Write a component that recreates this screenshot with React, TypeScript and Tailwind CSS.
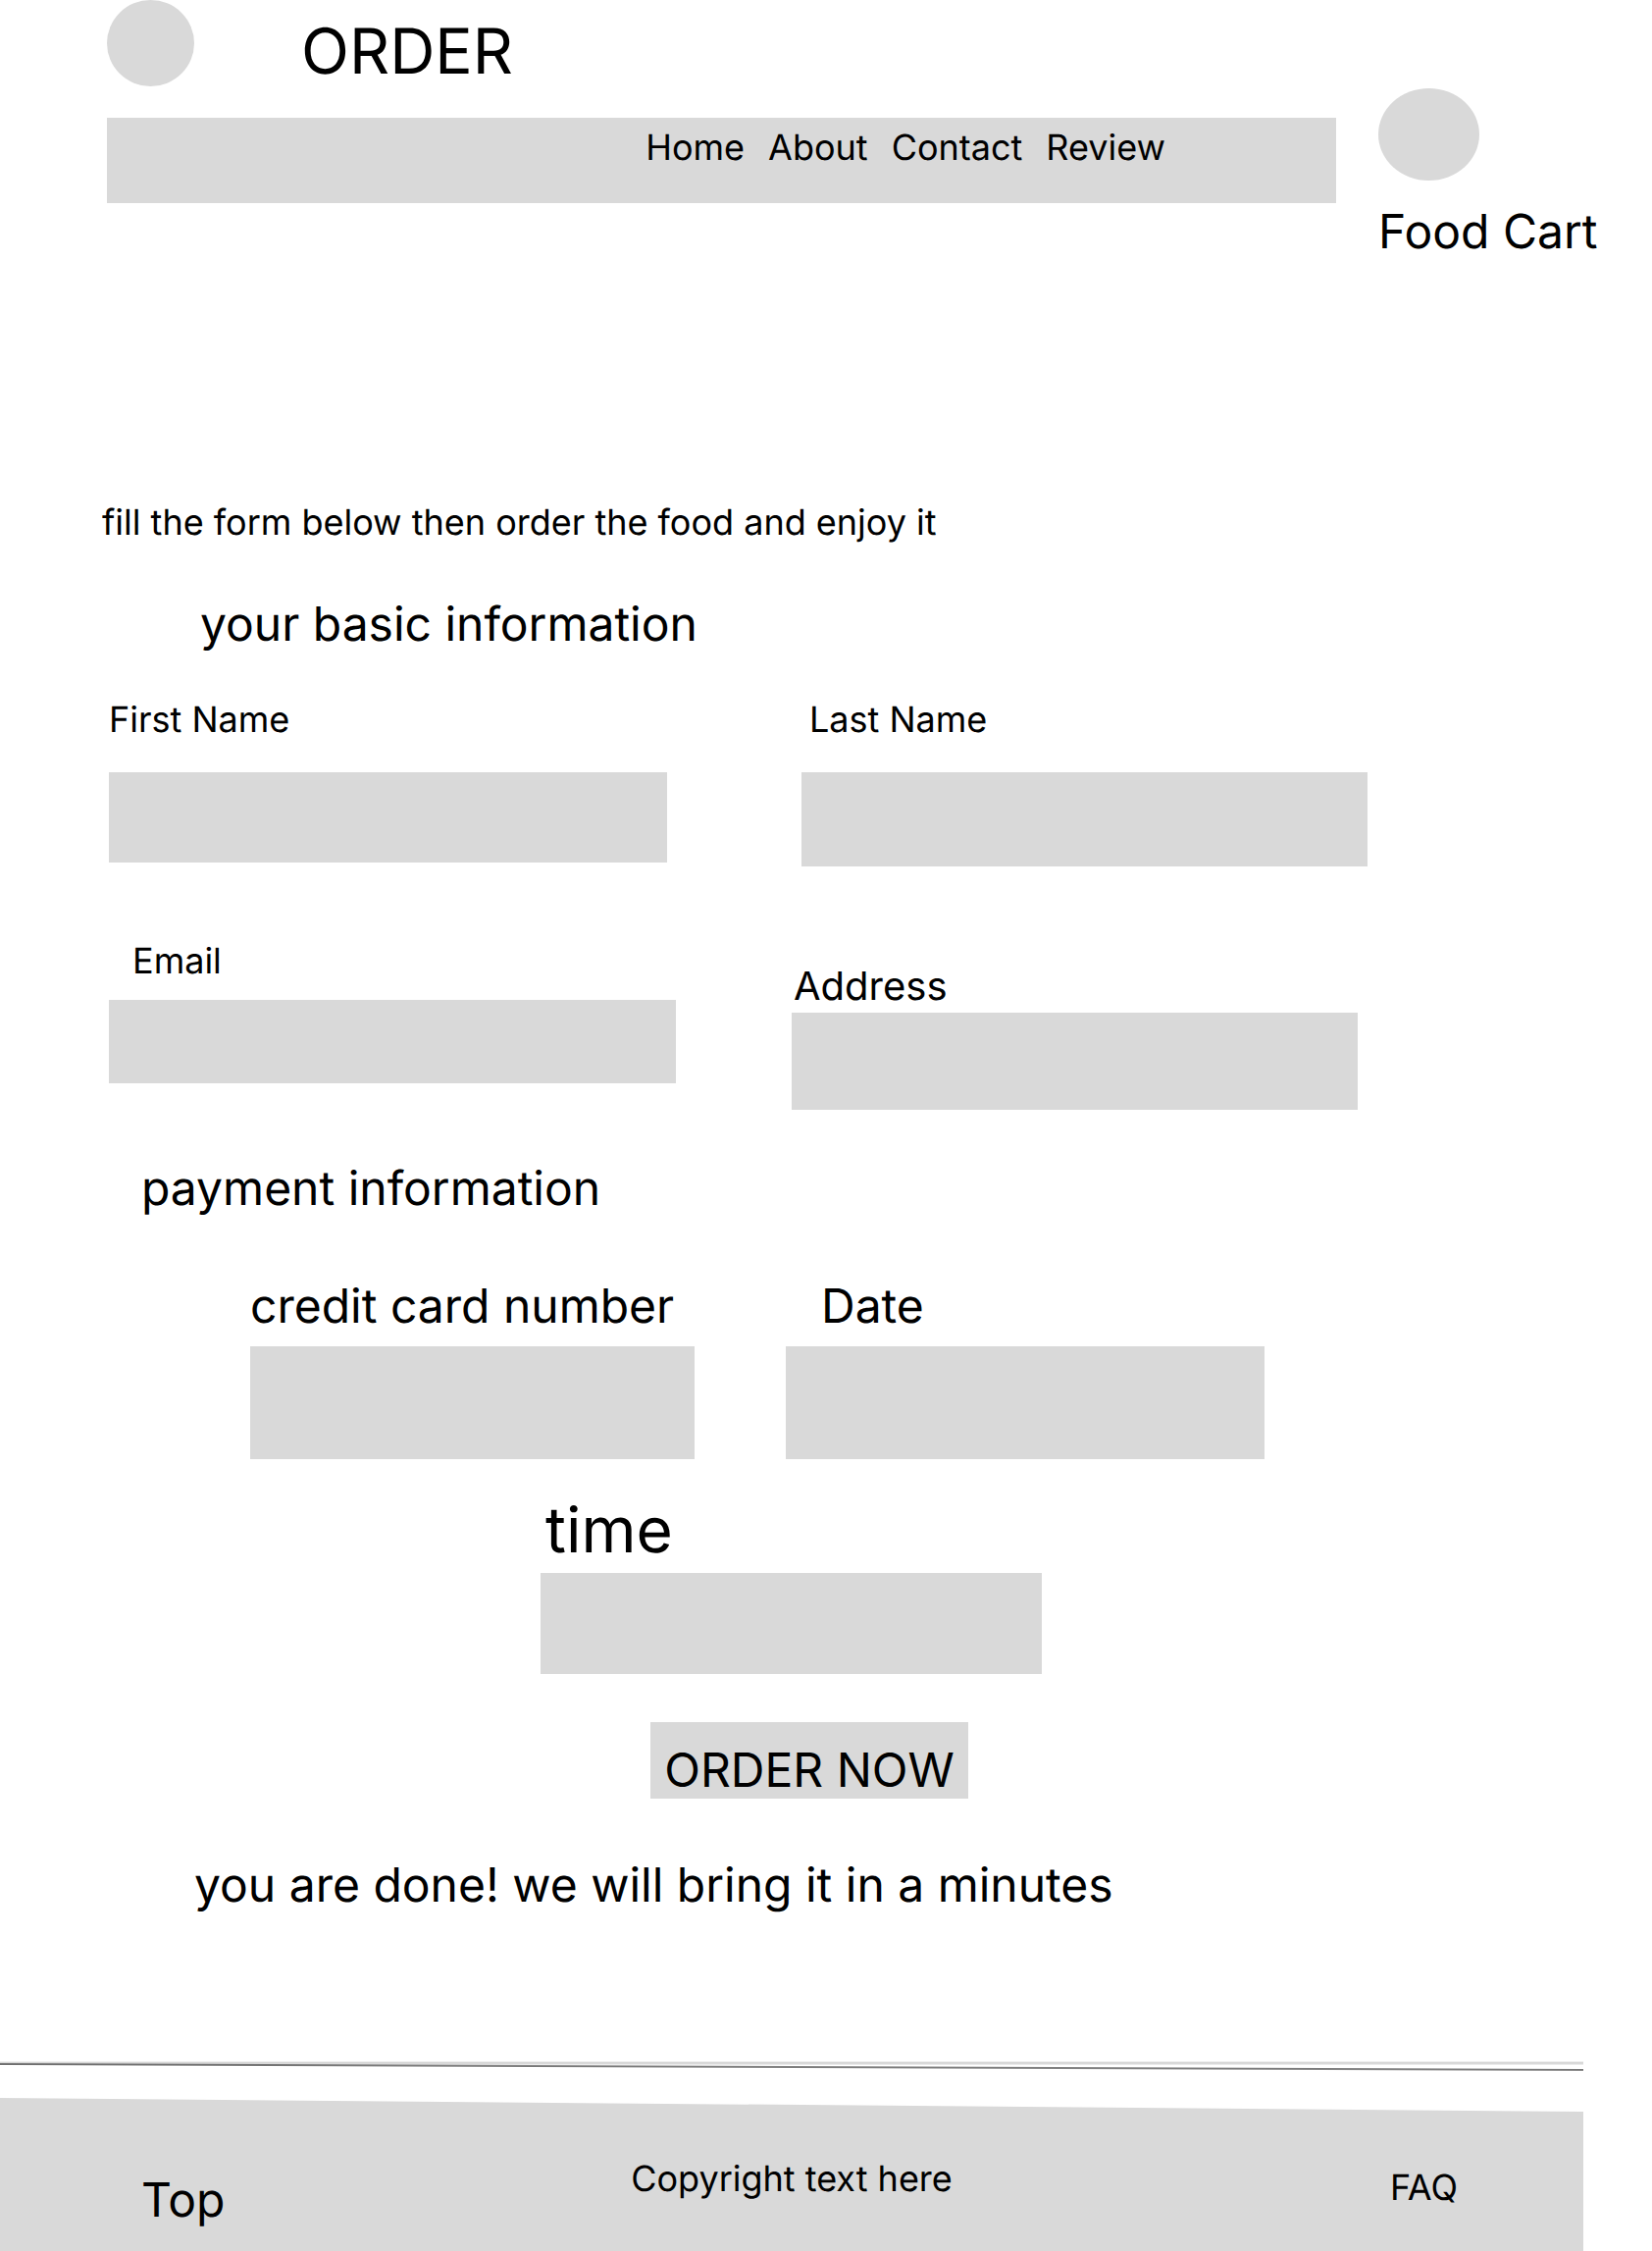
import type { ReactNode } from "react";

type FieldProps = {
  id: string;
  label: string;
  type?: string;
  className?: string;
  labelClass: string;
  boxClass: string;
};

function Field({ id, label, type = "text", className = "", labelClass, boxClass }: FieldProps) {
  return (
    <div className={`flex min-w-0 flex-col items-start ${className}`}>
      <label htmlFor={id} className={`whitespace-nowrap ${labelClass}`}>
        {label}
      </label>
      <input
        id={id}
        name={id}
        type={type}
        className={`w-full bg-[#d9d9d9] px-4 text-[36px] outline-none ${boxClass}`}
      />
    </div>
  );
}

function SectionTitle({ className, children }: { className: string; children: ReactNode }) {
  return <h2 className={`text-[48px] leading-[58px] ${className}`}>{children}</h2>;
}

const links = ["Home", "About", "Contact", "Review"];

export default function App() {
  return (
    <div className="bg-white font-['Inter',sans-serif] text-black [text-rendering:geometricPrecision]">
      <header id="top" className="flex items-start gap-[43px] pl-[109px]">
        <div className="flex-1">
          <div className="flex items-start gap-[109px]">
            <div className="h-[88px] w-[89px] rounded-[50%] bg-[#d9d9d9]" />
            <h1 className="mt-[14px] text-[64px] leading-[77px]">ORDER</h1>
          </div>
          <nav className="mt-[29px] flex h-[87px] items-start justify-end gap-6 bg-[#d9d9d9] pt-2 pr-[174px] text-[36px] leading-[44px]">
            {links.map((link) => (
              <a key={link} href={`#${link.toLowerCase()}`}>
                {link}
              </a>
            ))}
          </nav>
        </div>
        <a href="#cart" className="block w-[279px] pt-[90px]">
          <span className="block h-[94px] w-[103px] rounded-[50%] bg-[#d9d9d9]" />
          <span className="mt-[23px] block text-[48px] leading-[58px] whitespace-nowrap">Food Cart</span>
        </a>
      </header>

      <main className="mt-[245px] mr-[71px]">
        <p className="ml-[104px] text-[36px] leading-[44px]">
          fill the form below then order the food and enjoy it
        </p>

        <form onSubmit={(e) => e.preventDefault()}>
          <SectionTitle className="mt-[53px] ml-[204px]">your basic information</SectionTitle>

          <div className="mt-[46px] mr-[219px] ml-[111px] grid grid-cols-[569fr_577fr] gap-x-[137px]">
            <Field id="first-name" label="First Name" labelClass="text-[36px] leading-[44px]" boxClass="mt-8 h-[92px]" />
            <Field id="last-name" label="Last Name" labelClass="pl-2 text-[36px] leading-[44px]" boxClass="mt-8 h-[96px]" />
          </div>

          <div className="mt-[74px] mr-[229px] ml-[111px] grid grid-cols-[578fr_577fr] gap-x-[118px]">
            <Field id="email" label="Email" type="email" labelClass="pl-6 text-[36px] leading-[44px]" boxClass="mt-[18px] h-[85px]" />
            <Field id="address" label="Address" className="pt-6" labelClass="pl-0.5 text-[40px] leading-[48px]" boxClass="mt-[3px] h-[99px]" />
          </div>

          <SectionTitle className="mt-[51px] ml-36">payment information</SectionTitle>

          <div className="mt-[62px] mr-[324px] ml-[255px] grid grid-cols-[453fr_488fr] gap-x-[93px]">
            <Field id="card-number" label="credit card number" labelClass="text-[48px] leading-[58px]" boxClass="mt-3 h-[115px]" />
            <Field id="date" label="Date" labelClass="pl-9 text-[48px] leading-[58px]" boxClass="mt-3 h-[115px]" />
          </div>

          <Field
            id="time"
            label="time"
            className="mx-auto mt-[34px] w-[511px]"
            labelClass="pl-[5px] text-[64px] leading-[77px]"
            boxClass="mt-[5px] h-[103px]"
          />

          <div className="mt-[49px] flex justify-center pl-[37px]">
            <button type="submit" className="h-[78px] w-[324px] bg-[#d9d9d9] pt-5 text-[48px] leading-[58px] whitespace-nowrap">
              ORDER NOW
            </button>
          </div>
        </form>

        <p className="mt-[59px] ml-[198px] text-[48px] leading-[58px]">you are done! we will bring it in a minutes</p>
      </main>

      <footer className="mt-[151px] mr-[70px]">
        <svg viewBox="0 0 1614 10" preserveAspectRatio="none" className="block h-[10px] w-full" aria-hidden="true">
          <rect width="1614" height="3" fill="#d9d9d9" />
          <line x1="0" y1="2.5" x2="1614" y2="8.5" stroke="#000" strokeWidth="1" />
        </svg>
        <div className="mt-[27px] grid min-h-[156px] grid-cols-[1fr_auto_1fr] items-start bg-[#d9d9d9] text-[36px] leading-[44px] [clip-path:polygon(0_0,100%_14px,100%_100%,0_100%)]">
          <a href="#top" className="mt-[75px] ml-36 justify-self-start text-[48px] leading-[58px]">
            Top
          </a>
          <p className="mt-[60px]">Copyright text here</p>
          <a href="#faq" className="mt-[69px] mr-32 justify-self-end">
            FAQ
          </a>
        </div>
      </footer>
    </div>
  );
}
